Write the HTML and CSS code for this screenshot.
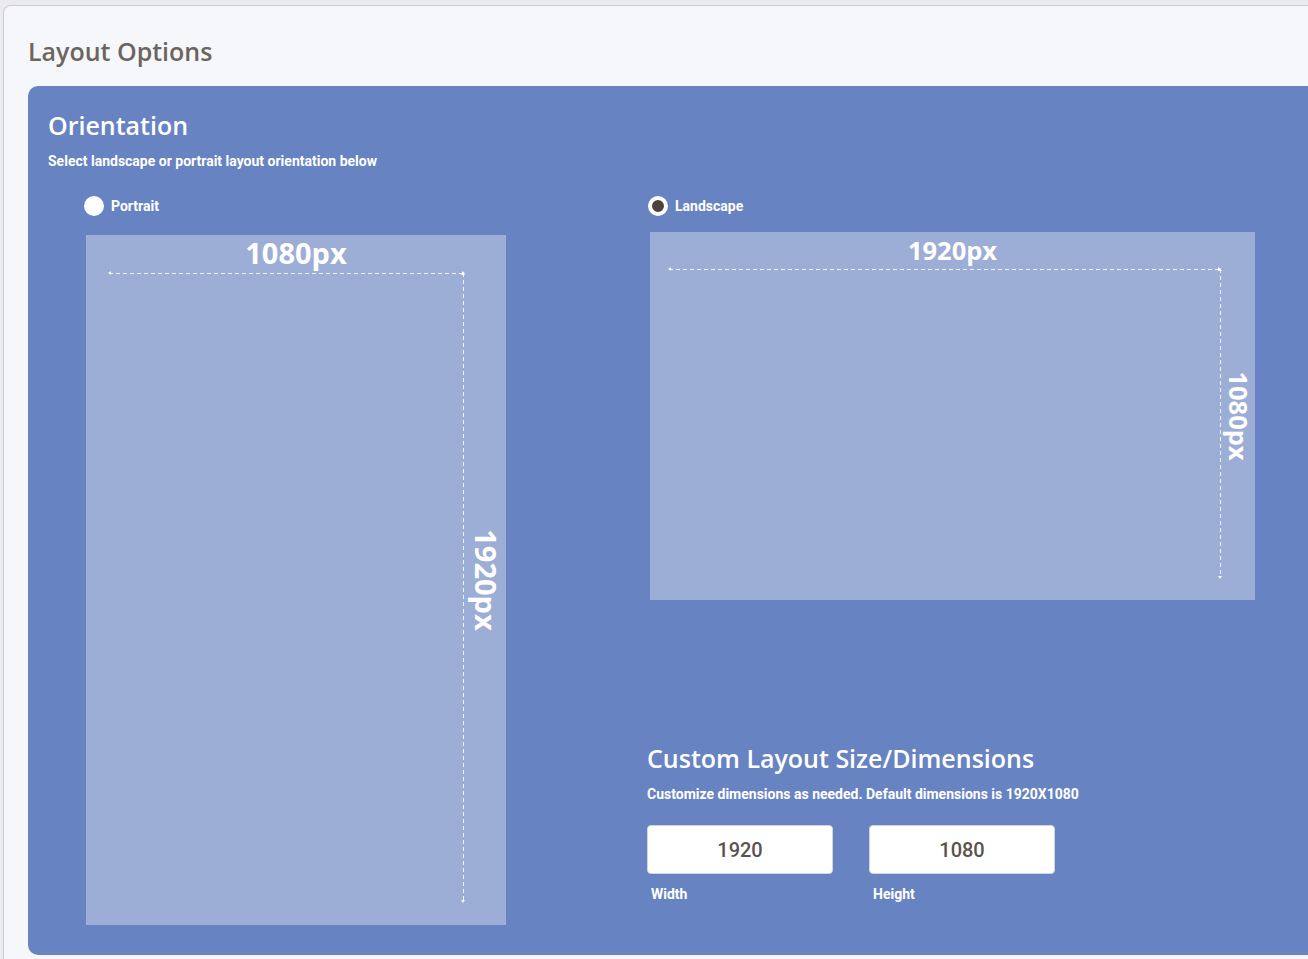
FILE: index.html
```html
<!DOCTYPE html>
<html lang="en">
<head>
  <meta charset="UTF-8" />
  <meta name="viewport" content="width=device-width, initial-scale=1.0"/>
  <title>Layout Options</title>
  <link rel="stylesheet" href="styles.css">
</head>
<body>
  <div class="card">
    <h1 class="page-title">Layout Options</h1>

    <section class="panel">
      <h2 class="panel-title">Orientation</h2>
      <p class="panel-note">Select landscape or portrait layout orientation below</p>

      <div class="options">
        <div class="option option-portrait">
          <label class="radio"><span class="radio-dot"></span>Portrait</label>
          <div class="frame frame-portrait">
            <div class="dim-top">1080px</div>
            <span class="dash-h"></span>
            <span class="dash-v"></span>
            <div class="dim-side">1920px</div>
          </div>
        </div>

        <div class="option option-landscape">
          <label class="radio"><span class="radio-dot is-checked"></span>Landscape</label>
          <div class="frame frame-landscape">
            <div class="dim-top">1920px</div>
            <span class="dash-h"></span>
            <span class="dash-v"></span>
            <div class="dim-side">1080px</div>
          </div>

          <div class="custom">
            <h2 class="panel-title">Custom Layout Size/Dimensions</h2>
            <p class="panel-note">Customize dimensions as needed. Default dimensions is 1920X1080</p>
            <div class="fields">
              <label class="field">
                <input type="text" value="1920">
                <span>Width</span>
              </label>
              <label class="field">
                <input type="text" value="1080">
                <span>Height</span>
              </label>
            </div>
          </div>
        </div>
      </div>
    </section>
  </div>
</body>
</html>
```

FILE: styles.css
```css
html, body { margin: 0; height: 100%; }
body {
  background: #ebebed;
  padding: 5px 0 0 3px;
  box-sizing: border-box;
  overflow: hidden;
  font-family: "Roboto", "Liberation Sans", sans-serif;
}
.card {
  width: 1360px;
  background: #f6f7fa;
  border: 1px solid #cdcdd1;
  border-right: none;
  border-radius: 8px 0 0 0;
  padding: 29px 0 20px 24px;
}
.page-title {
  margin: 0 0 19px;
  font-family: "Open Sans", sans-serif;
  font-weight: 600;
  font-size: 25px;
  line-height: 32px;
  color: #6b6560;
}
.panel {
  background: #6883c2;
  border-radius: 10px 0 0 10px;
  padding: 23px 20px 30px;
  color: #fff;
}
.panel-title {
  margin: 0;
  font-family: "Open Sans", sans-serif;
  font-weight: 600;
  font-size: 25px;
  line-height: 32px;
}
.panel-note {
  margin: 12px 0 0;
  font-weight: 700;
  font-size: 14px;
  line-height: 16px;
}
.options {
  display: flex;
  gap: 142px;
  margin: 27px 0 0 36px;
}
.option-portrait { width: 422px; }
.option-landscape { width: 607px; }

.radio {
  display: flex;
  align-items: center;
  gap: 7px;
  height: 20px;
  font-weight: 700;
  font-size: 14px;
  line-height: 16px;
}
.radio-dot {
  width: 20px;
  height: 20px;
  box-sizing: border-box;
  border-radius: 50%;
  background: #fff;
}
.radio-dot.is-checked {
  border: 4px solid #fff;
  background: #4e413c;
}

.frame {
  position: relative;
  margin-left: 2px;
  background: #9daed6;
  font-family: "Open Sans", sans-serif;
  font-weight: 700;
  text-align: center;
}
.frame-portrait {
  width: 420px;
  height: 690px;
  margin-top: 19px;
}
.frame-landscape {
  width: 605px;
  height: 368px;
  margin-top: 16px;
}
.frame-portrait .dim-top { font-size: 29px; line-height: 34px; padding-top: 1px; }
.frame-landscape .dim-top { font-size: 25.5px; line-height: 30px; padding-top: 3px; }

.dim-side {
  position: absolute;
  top: 50%;
  writing-mode: vertical-rl;
  transform: translate(-50%, -50%);
}
.frame-portrait .dim-side { left: 400px; font-size: 29px; line-height: 34px; }
.frame-landscape .dim-side { left: 589px; font-size: 25.5px; line-height: 30px; }

.dash-h, .dash-v { position: absolute; }
.dash-h {
  height: 1px;
  background: repeating-linear-gradient(to right, rgba(255,255,255,.85) 0 4px, transparent 4px 7px);
}
.dash-v {
  width: 1px;
  background: repeating-linear-gradient(to bottom, rgba(255,255,255,.85) 0 4px, transparent 4px 7px);
}
.dash-h::before, .dash-h::after, .dash-v::before, .dash-v::after {
  content: "";
  position: absolute;
  width: 0;
  height: 0;
}
.dash-h::before {
  left: -1px;
  top: -2px;
  border-top: 2.5px solid transparent;
  border-bottom: 2.5px solid transparent;
  border-right: 3px solid rgba(255,255,255,.9);
}
.dash-h::after {
  right: -1px;
  top: -2px;
  border-top: 2.5px solid transparent;
  border-bottom: 2.5px solid transparent;
  border-left: 3px solid rgba(255,255,255,.9);
}
.dash-v::before {
  top: -1px;
  left: -2px;
  border-left: 2.5px solid transparent;
  border-right: 2.5px solid transparent;
  border-bottom: 3px solid rgba(255,255,255,.9);
}
.dash-v::after {
  bottom: -1px;
  left: -2px;
  border-left: 2.5px solid transparent;
  border-right: 2.5px solid transparent;
  border-top: 3px solid rgba(255,255,255,.9);
}
.frame-portrait .dash-h { left: 23px; top: 38px; width: 355px; }
.frame-portrait .dash-v { left: 377px; top: 38px; height: 629px; }
.frame-landscape .dash-h { left: 19px; top: 37px; width: 551px; }
.frame-landscape .dash-v { left: 570px; top: 37px; height: 309px; }

.custom {
  margin: 142px 0 0 -1px;
}
.fields {
  display: flex;
  gap: 36px;
  margin-top: 23px;
}
.field {
  display: flex;
  flex-direction: column;
  gap: 12px;
  width: 186px;
  font-weight: 700;
  font-size: 14px;
  line-height: 16px;
}
.field span { padding-left: 4px; }
.field input {
  box-sizing: border-box;
  width: 186px;
  height: 49px;
  border: 1px solid #d3d5de;
  border-radius: 4px;
  background: #fff;
  text-align: center;
  font-family: "Roboto", sans-serif;
  font-weight: 500;
  font-size: 20px;
  color: #5a524e;
  outline: none;
}
```
